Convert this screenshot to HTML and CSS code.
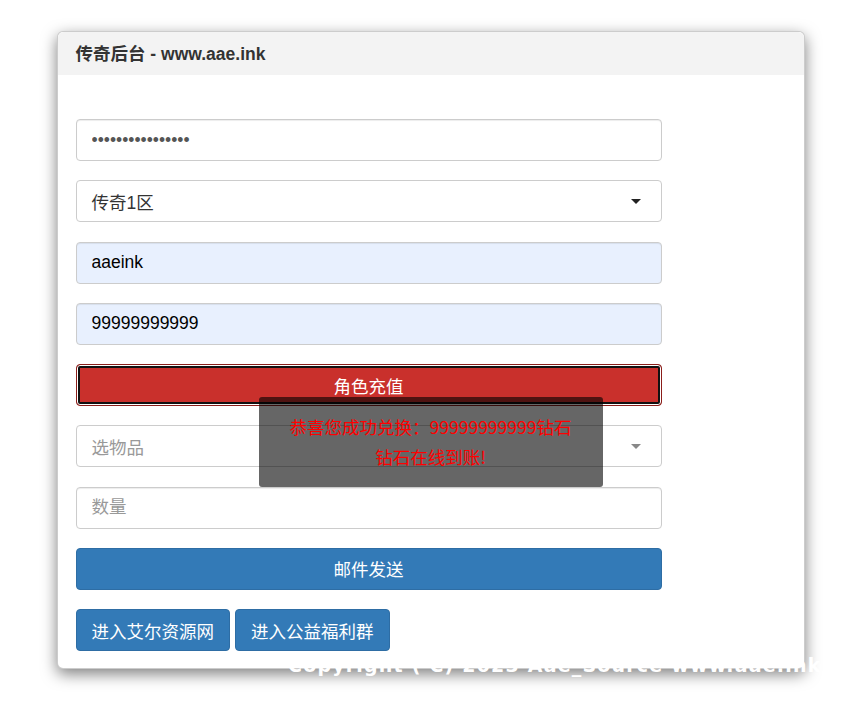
FILE: index.html
```html
<!DOCTYPE html>
<html lang="zh-CN">
<head>
<meta charset="utf-8">
<title>传奇后台</title>
<link rel="stylesheet" href="styles.css">
</head>
<body>
<div class="page">
  <div class="panel">
    <div class="panel-heading">传奇后台 - www.aae.ink</div>
    <div class="panel-body">
      <form class="form">
        <div class="field"><input class="input pwd" type="password" value="1234567890123456"></div>
        <div class="field select">
          <span class="value">传奇1区</span>
          <span class="caret"></span>
        </div>
        <div class="field"><input class="input filled" type="text" value="aaeink"></div>
        <div class="field"><input class="input filled" type="text" value="99999999999"></div>
        <div class="field"><button type="button" class="btn btn-danger">角色充值</button></div>
        <div class="field select">
          <span class="value placeholder">选物品</span>
          <span class="caret grey"></span>
        </div>
        <div class="field"><input class="input" type="text" placeholder="数量"></div>
        <div class="field"><button type="button" class="btn btn-primary">邮件发送</button></div>
        <div class="links">
          <button type="button" class="btn btn-primary btn-inline">进入艾尔资源网</button>
          <button type="button" class="btn btn-primary btn-inline">进入公益福利群</button>
        </div>
      </form>
      <div class="toast">恭喜您成功兑换：99999999999钻石<br>钻石在线到账!</div>
    </div>
  </div>
  <div class="copyright">Copyright ( C) 2023 Aae_Source www.aae.ink</div>
</div>
</body>
</html>
```

FILE: styles.css
```css
* { box-sizing: border-box; }
html, body { margin: 0; padding: 0; background: #fff; }
body {
  font-family: "Liberation Sans", "Noto Sans CJK SC", Arial, sans-serif;
  color: #333;
}
.page {
  position: relative;
  padding-top: 31px;
  height: 702px;
}
.panel {
  width: 748px;
  margin: 0 auto;
  background: #fff;
  border: 1px solid rgba(0,0,0,0.2);
  border-radius: 6px;
  box-shadow: 0 5px 15px rgba(0,0,0,0.5);
}
.panel-heading {
  background: #f3f3f3;
  height: 43px;
  padding: 0 18px;
  line-height: 44px;
  font-size: 17.5px;
  font-weight: bold;
  color: #333;
  border-radius: 6px 6px 0 0;
}
.panel-body {
  position: relative;
  padding: 44px 18px 17px;
}
.form {
  width: 586px;
  display: flex;
  flex-direction: column;
  gap: 19.25px;
}
.field { height: 42px; }
.input {
  width: 100%;
  height: 42px;
  border: 1px solid #ccc;
  border-radius: 4px;
  padding: 0 15px;
  font-family: "Liberation Sans", "Noto Sans CJK SC", sans-serif;
  font-size: 17.5px;
  color: #333;
  background: #fff;
  outline: none;
  box-shadow: inset 0 1px 1px rgba(0,0,0,0.075);
}
.input::placeholder { color: #999; }
.input.filled { background: #e8f0fe; color: #000; }
.input.pwd { font-size: 17.5px; color: #555; }
.select {
  display: flex;
  align-items: center;
  justify-content: space-between;
  border: 1px solid #ccc;
  border-radius: 4px;
  padding: 0 20px 0 15px;
  background: #fff;
  font-size: 17.5px;
  color: #333;
}
.select .placeholder { color: #999; }
.caret {
  width: 0;
  height: 0;
  border-left: 5px solid transparent;
  border-right: 5px solid transparent;
  border-top: 5px solid #222;
}
.caret.grey { border-top-color: #888; }
.btn {
  display: block;
  width: 100%;
  height: 42px;
  border-radius: 4px;
  font-family: "Liberation Sans", "Noto Sans CJK SC", sans-serif;
  font-size: 17.5px;
  color: #fff;
  cursor: pointer;
  padding: 0;
}
.btn-danger {
  background: #c9302c;
  border: 1px solid #8b1e1a;
  box-shadow: inset 0 0 0 1px #fff, inset 0 0 0 3px #111;
}
.btn-primary {
  background: #337ab7;
  border: 1px solid #2e6da4;
}
.links {
  display: flex;
  gap: 5px;
}
.btn-inline {
  width: auto;
  padding: 0 15px;
}
.toast {
  position: absolute;
  left: 201px;
  top: 322px;
  width: 344px;
  height: 90px;
  background: rgba(0,0,0,0.6);
  border-radius: 3px;
  color: #f00;
  font-family: "Noto Sans CJK SC", sans-serif;
  font-size: 17.5px;
  line-height: 30px;
  text-align: center;
  padding-top: 15px;
}
.copyright {
  position: absolute;
  left: 288px;
  top: 654px;
  color: #fff;
  font-family: "DejaVu Sans", sans-serif;
  font-weight: bold;
  font-size: 19px;
  letter-spacing: 1.2px;
  white-space: nowrap;
}
```
